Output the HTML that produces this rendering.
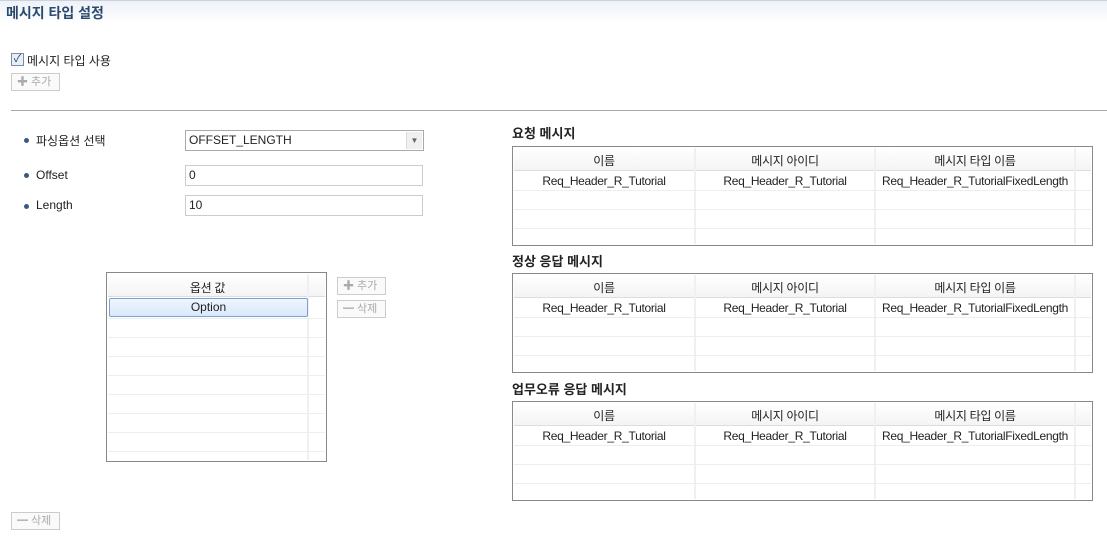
<!DOCTYPE html><html><head><meta charset="utf-8"><style>
*{box-sizing:border-box}body{margin:0;width:1107px;height:540px;background:#fff;font-family:"Liberation Sans","Noto Sans CJK KR",sans-serif;font-size:12px;color:#222;position:relative;overflow:hidden}
.a{position:absolute}
.title{left:0;top:0;width:1107px;height:24px;background:linear-gradient(#eef2f8,#fff);border-top:1px solid #c9d3e0}
.btn{position:absolute;height:18px;border:1px solid #ccc;background:#fafafa;color:#aaa;font-size:11px;line-height:16px;padding-left:5px}
.inp{position:absolute;border:1px solid #ccc;height:21px;padding-left:3px;line-height:19px;font-size:12px}
.dot{position:absolute;width:5px;height:5px;border-radius:50%;background:#3c5a80}
.tbl{position:absolute;border:1px solid #888;background:#fff;overflow:hidden}
.hd{position:absolute;top:1px;left:1px;right:1px;height:23px;background:linear-gradient(#fff,#f4f4f4);border-bottom:1px solid #ddd}
.c{position:absolute;text-align:center;font-size:12px;letter-spacing:-0.3px}
.hl{position:absolute;left:1px;right:1px;height:1px;background:#eee}
.vl{position:absolute;top:1px;bottom:1px;width:2px;background:#eef0f4}
.h3{position:absolute;font-weight:bold;font-size:13px;color:#222}
</style></head><body>
<div class="a title"></div>
<div class="a" style="left:6px;top:3px;font-size:14px;font-weight:bold;color:#2a4a6e">메시지 타입 설정</div>
<div class="a" style="left:11px;top:53px;width:13px;height:13px;border:1px solid #7a8ea8;background:#e8eef6;font-size:11px;line-height:11px;text-align:center;color:#345">✓</div>
<div class="a" style="left:27px;top:52px;font-size:12px">메시지 타입 사용</div>
<div class="btn" style="left:11px;top:73px;width:49px">✚ 추가</div>
<div class="a" style="left:11px;top:110px;width:1096px;height:1px;background:#a8a8a8"></div>
<div class="dot" style="left:24px;top:138px"></div><div class="a" style="left:36px;top:132px">파싱옵션 선택</div>
<div class="dot" style="left:24px;top:173px"></div><div class="a" style="left:36px;top:168px">Offset</div>
<div class="dot" style="left:24px;top:204px"></div><div class="a" style="left:36px;top:198px">Length</div>
<div class="inp" style="left:185px;top:130px;width:239px;border-color:#aaa">OFFSET_LENGTH<div class="a" style="right:1px;top:1px;width:16px;height:17px;background:#f0f0f0;border-left:1px solid #ddd;font-size:8px;text-align:center;line-height:17px;color:#666">▼</div></div>
<div class="inp" style="left:185px;top:165px;width:238px">0</div>
<div class="inp" style="left:185px;top:195px;width:238px">10</div>

<div class="tbl" style="left:106px;top:272px;width:221px;height:190px">
<div class="hd"></div><div class="c" style="left:0;width:201px;top:6px">옵션 값</div>
<div class="vl" style="left:200px"></div>
<div class="a" style="left:2px;top:25px;width:199px;height:19px;border:1px solid #7da2ce;border-radius:2px;background:linear-gradient(#f0f6fe,#d9e8fb);text-align:center;line-height:17px">Option</div>
<div class="hl" style="top:45px"></div><div class="hl" style="top:64px"></div><div class="hl" style="top:83px"></div><div class="hl" style="top:102px"></div><div class="hl" style="top:121px"></div><div class="hl" style="top:140px"></div><div class="hl" style="top:159px"></div><div class="hl" style="top:178px"></div>
</div>
<div class="btn" style="left:337px;top:277px;width:49px">✚ 추가</div>
<div class="btn" style="left:337px;top:300px;width:49px">━ 삭제</div>

<div class="h3" style="left:512px;top:123px">요청 메시지</div>
<div class="h3" style="left:512px;top:251px">정상 응답 메시지</div>
<div class="h3" style="left:512px;top:379px">업무오류 응답 메시지</div>

<div class="tbl" style="left:512px;top:146px;width:581px;height:100px"></div>
<div class="tbl" style="left:512px;top:273px;width:581px;height:100px"></div>
<div class="tbl" style="left:512px;top:401px;width:581px;height:100px"></div>
<script>
var ts=document.querySelectorAll('.tbl');
for(var i=1;i<ts.length;i++){
ts[i].innerHTML='<div class="hd"></div><div class="c" style="left:0;width:182px;top:5px">이름</div><div class="c" style="left:182px;width:180px;top:5px">메시지 아이디</div><div class="c" style="left:362px;width:200px;top:5px">메시지 타입 이름</div><div class="vl" style="left:181px"></div><div class="vl" style="left:361px"></div><div class="vl" style="left:561px"></div><div class="c" style="left:0;width:182px;top:27px">Req_Header_R_Tutorial</div><div class="c" style="left:182px;width:180px;top:27px">Req_Header_R_Tutorial</div><div class="c" style="left:362px;width:200px;top:27px">Req_Header_R_TutorialFixedLength</div><div class="hl" style="top:43px"></div><div class="hl" style="top:62px"></div><div class="hl" style="top:81px"></div>';}
</script>
<div class="btn" style="left:11px;top:512px;width:49px">━ 삭제</div>
</body></html>
